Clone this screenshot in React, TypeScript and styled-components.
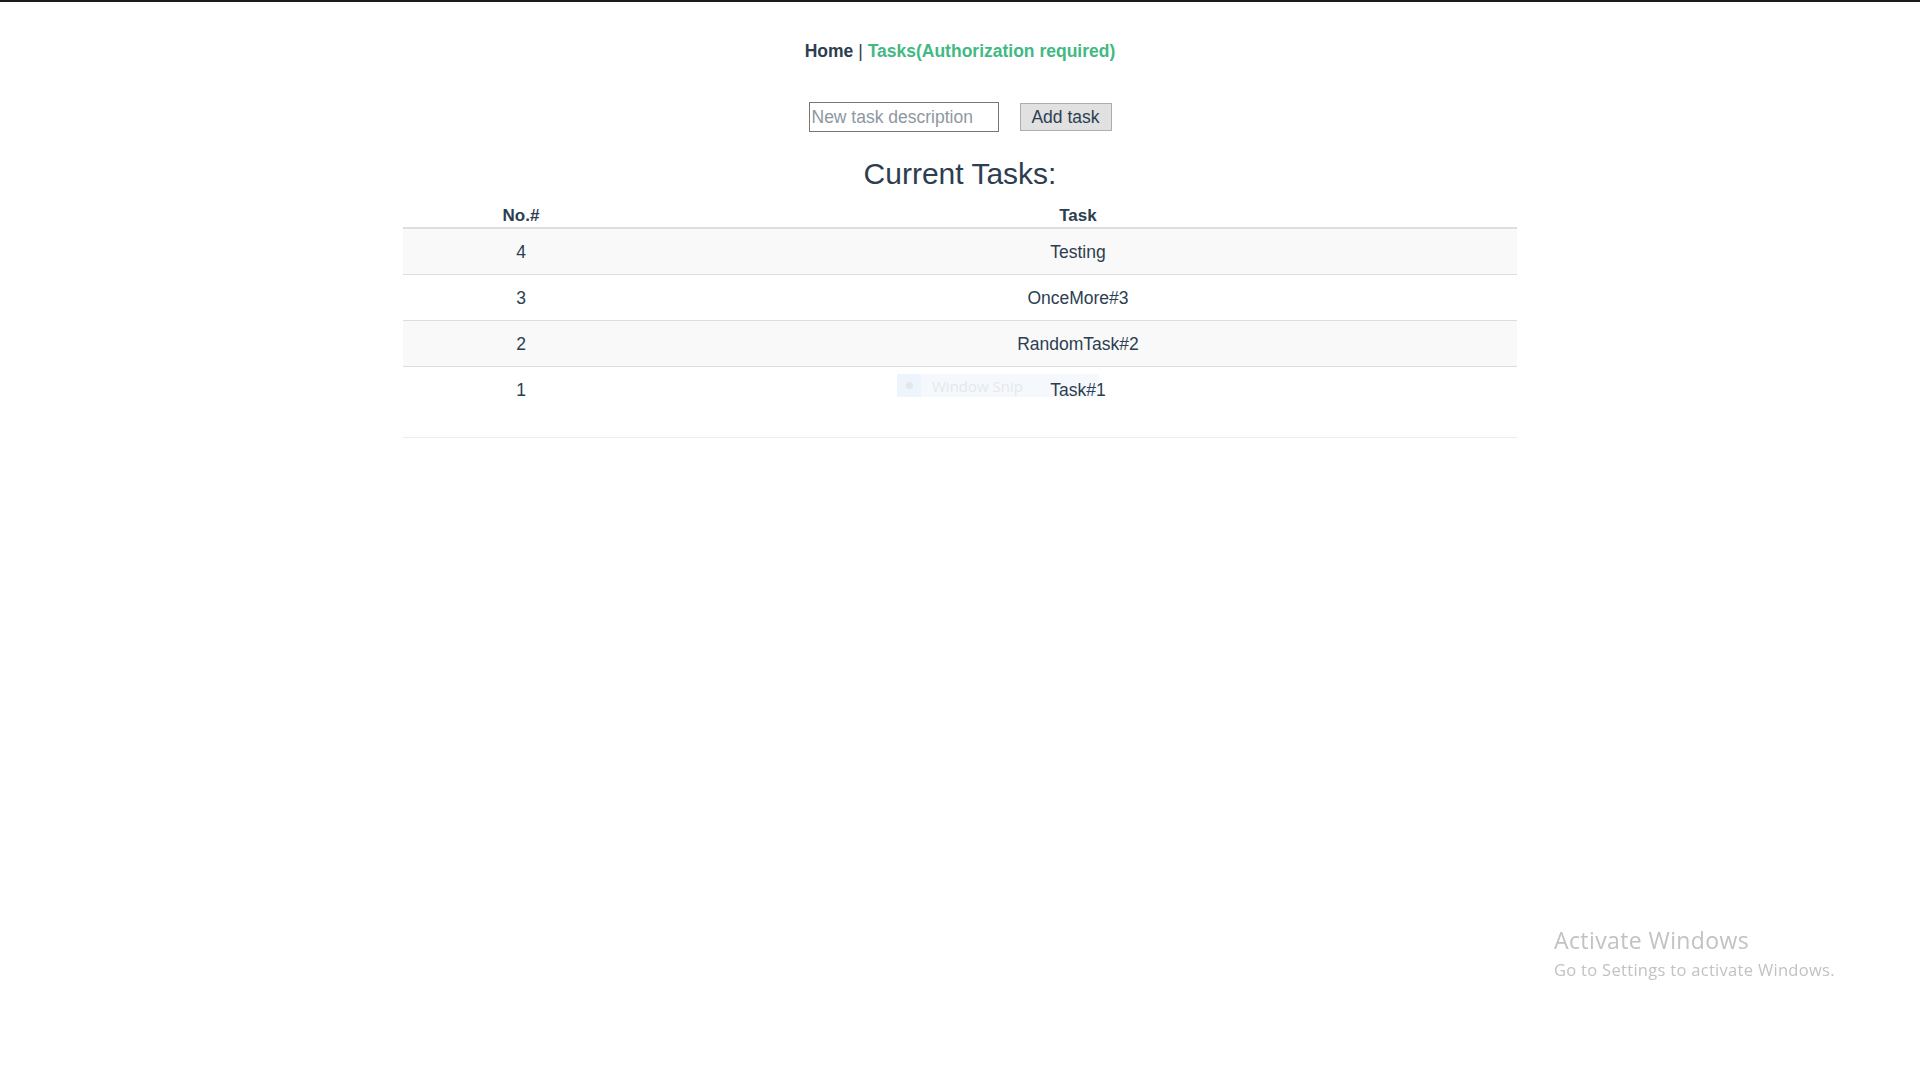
import styled, { createGlobalStyle } from "styled-components";

const GlobalStyle = createGlobalStyle`
  html, body {
    margin: 0;
    padding: 0;
    background: #fff;
  }
  body {
    border-top: 2px solid #1b1b1b;
    font-family: "Liberation Sans", Arial, Helvetica, sans-serif;
    color: #2c3e50;
  }
`;

const Page = styled.div`
  position: relative;
  min-height: 1078px;
  text-align: center;
`;

const Nav = styled.nav`
  padding-top: 39px;
  font-size: 17.5px;
  line-height: 20px;
`;

const NavLink = styled.a<{ $active?: boolean }>`
  font-weight: bold;
  text-decoration: none;
  color: ${(p) => (p.$active ? "#42b983" : "#2c3e50")};
  cursor: pointer;
`;

const AddForm = styled.form`
  display: flex;
  justify-content: center;
  align-items: center;
  gap: 21px;
  margin-top: 41px;
`;

const TaskInput = styled.input`
  box-sizing: border-box;
  width: 190px;
  height: 30px;
  padding: 1px 2px;
  border: 1px solid #767676;
  font-family: inherit;
  font-size: 17.5px;
  color: #2c3e50;
  &::placeholder {
    color: #8e979f;
  }
`;

const AddButton = styled.button`
  box-sizing: border-box;
  width: 92px;
  height: 28px;
  padding: 0;
  border: 1px solid #adadad;
  background: #e1e1e1;
  font-family: inherit;
  font-size: 17.5px;
  color: #2c3e50;
`;

const Heading = styled.h2`
  margin: 25px 0 0;
  font-size: 30px;
  line-height: 34px;
  font-weight: normal;
`;

const Table = styled.table`
  position: relative;
  z-index: 1;
  width: 1114px;
  margin: 10px auto 0;
  border-collapse: collapse;
  table-layout: fixed;
`;

const HeadCell = styled.th<{ $width?: number }>`
  width: ${(p) => (p.$width ? `${p.$width}px` : "auto")};
  height: 26px;
  padding: 0;
  border-bottom: 2px solid #dedede;
  font-size: 17px;
  line-height: 22px;
  font-weight: bold;
  vertical-align: bottom;
`;

const Row = styled.tr<{ $striped: boolean }>`
  background: ${(p) => (p.$striped ? "#f9f9f9" : "transparent")};
  &:last-child td {
    border-bottom: none;
  }
`;

const Cell = styled.td`
  height: 45px;
  padding: 0;
  border-bottom: 1px solid #dddddd;
  font-size: 17.5px;
  line-height: 20px;
  vertical-align: middle;
`;

const FootCell = styled.td`
  height: 25px;
  padding: 0;
  border-bottom: 1px solid #ececec;
`;

const SnipBar = styled.div`
  position: absolute;
  left: 897px;
  top: 372px;
  z-index: 0;
  display: flex;
  align-items: center;
  width: 202px;
  height: 23px;
  background: #f5f9fe;
`;

const SnipIcon = styled.div`
  display: flex;
  align-items: center;
  justify-content: center;
  width: 24px;
  height: 23px;
  background: #eef4fc;
  &::after {
    content: "";
    width: 7px;
    height: 7px;
    border-radius: 50%;
    background: #e4e6e8;
  }
`;

const SnipLabel = styled.span`
  margin-left: 11px;
  font-family: "Open Sans", "Noto Sans", sans-serif;
  font-size: 15px;
  color: #e6e8ea;
`;

const Watermark = styled.div`
  position: fixed;
  left: 1554px;
  top: 926px;
  display: flex;
  flex-direction: column;
  gap: 5px;
  text-align: left;
  font-family: "Open Sans", "Noto Sans", sans-serif;
  color: #c2c2c2;
  pointer-events: none;
`;

const WatermarkTitle = styled.div`
  font-size: 23px;
  line-height: 28px;
  letter-spacing: 0.4px;
`;

const WatermarkText = styled.div`
  font-size: 16.5px;
  line-height: 22px;
  letter-spacing: 0.3px;
`;

const tasks = [
  { id: 4, description: "Testing" },
  { id: 3, description: "OnceMore#3" },
  { id: 2, description: "RandomTask#2" },
  { id: 1, description: "Task#1" },
];

export default function App() {
  return (
    <>
      <GlobalStyle />
      <Page>
        <Nav>
          <NavLink>Home</NavLink> | <NavLink $active>Tasks(Authorization required)</NavLink>
        </Nav>

        <AddForm onSubmit={(e) => e.preventDefault()}>
          <TaskInput type="text" placeholder="New task description" />
          <AddButton type="submit">Add task</AddButton>
        </AddForm>

        <Heading>Current Tasks:</Heading>

        <Table>
          <thead>
            <tr>
              <HeadCell $width={236}>No.#</HeadCell>
              <HeadCell>Task</HeadCell>
            </tr>
          </thead>
          <tbody>
            {tasks.map((task, i) => (
              <Row key={task.id} $striped={i % 2 === 0}>
                <Cell>{task.id}</Cell>
                <Cell>{task.description}</Cell>
              </Row>
            ))}
          </tbody>
          <tfoot>
            <tr>
              <FootCell colSpan={2} />
            </tr>
          </tfoot>
        </Table>

        <SnipBar>
          <SnipIcon />
          <SnipLabel>Window Snip</SnipLabel>
        </SnipBar>

        <Watermark>
          <WatermarkTitle>Activate Windows</WatermarkTitle>
          <WatermarkText>Go to Settings to activate Windows.</WatermarkText>
        </Watermark>
      </Page>
    </>
  );
}
